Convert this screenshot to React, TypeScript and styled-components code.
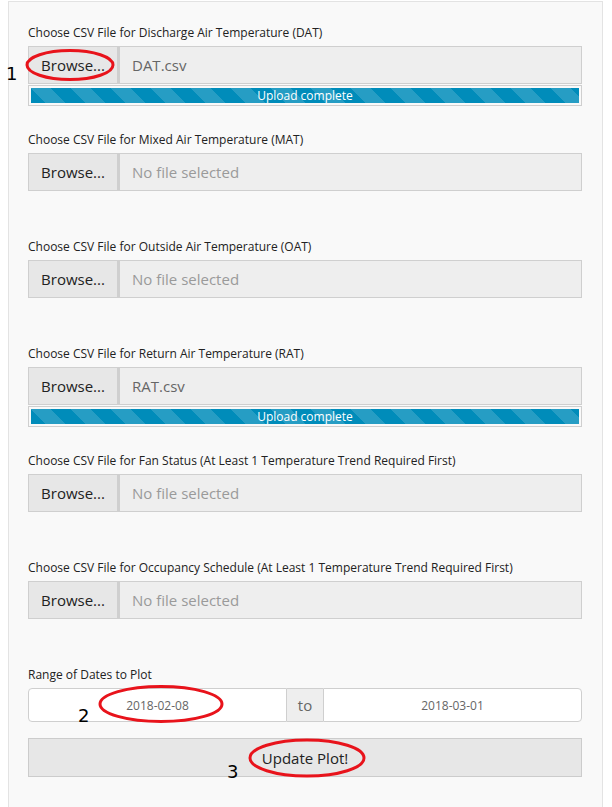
import React from 'react';
import styled, { createGlobalStyle } from 'styled-components';

const GlobalStyle = createGlobalStyle`
  html, body {
    margin: 0;
    padding: 0;
    background: #ffffff;
  }
  body {
    font-family: "Open Sans", "Liberation Sans", sans-serif;
    color: #222;
  }
  * {
    box-sizing: border-box;
  }
`;

const Page = styled.div`
  position: relative;
  width: 612px;
  height: 807px;
  overflow: hidden;
`;

const Well = styled.div`
  margin: 1px 0 0 8px;
  width: 595px;
  min-height: 830px;
  background: #f9f9f9;
  border: 1px solid #e3e3e3;
  padding: 22px 20px 40px 19px;
`;

const FieldGroup = styled.div`
  margin-bottom: 25px;
`;

const Label = styled.label`
  display: block;
  font-size: 12px;
  line-height: 17px;
  margin-bottom: 5px;
  color: #222;
`;

const InputGroup = styled.div`
  display: flex;
  height: 38px;
`;

const BrowseButton = styled.div`
  width: 90px;
  display: flex;
  align-items: center;
  justify-content: center;
  background: #e7e7e7;
  border: 1px solid #cfcfcf;
  font-size: 15px;
  color: #222;
`;

const FileName = styled.div<{ $empty: boolean }>`
  flex: 1;
  display: flex;
  align-items: center;
  padding-left: 12px;
  background: #eeeeee;
  border: 1px solid #cfcfcf;
  border-left-width: 2px;
  font-size: 15px;
  color: ${p => (p.$empty ? '#9a9a9a' : '#666')};
`;

const ProgressWrap = styled.div<{ $visible: boolean }>`
  margin-top: 1px;
  border: 1px solid #cfcfcf;
  padding: 2px;
  visibility: ${p => (p.$visible ? 'visible' : 'hidden')};
`;

const ProgressBar = styled.div`
  height: 15px;
  background-color: #008cba;
  background-image: linear-gradient(
    45deg,
    rgba(255, 255, 255, 0.15) 25%,
    transparent 25%,
    transparent 50%,
    rgba(255, 255, 255, 0.15) 50%,
    rgba(255, 255, 255, 0.15) 75%,
    transparent 75%,
    transparent
  );
  background-size: 40px 40px;
  color: #fff;
  font-size: 12px;
  line-height: 16px;
  text-align: center;
`;

const DateGroup = styled.div`
  display: flex;
  height: 34px;
`;

const DateInput = styled.div<{ $side: 'left' | 'right' }>`
  flex: 1;
  display: flex;
  align-items: center;
  justify-content: center;
  background: #fff;
  border: 1px solid #cfcfcf;
  border-radius: ${p => (p.$side === 'left' ? '4px 0 0 4px' : '0 4px 4px 0')};
  font-size: 12px;
  color: #666;
`;

const Addon = styled.div`
  width: 36px;
  display: flex;
  align-items: center;
  justify-content: center;
  background: #eeeeee;
  border-top: 1px solid #cfcfcf;
  border-bottom: 1px solid #cfcfcf;
  font-size: 15px;
  color: #666;
`;

const UpdateButton = styled.div`
  margin-top: 16px;
  height: 39px;
  display: flex;
  align-items: center;
  justify-content: center;
  background: #e7e7e7;
  border: 1px solid #cccccc;
  font-size: 15px;
  color: #222;
`;

const Overlay = styled.svg`
  position: absolute;
  left: 0;
  top: 0;
  pointer-events: none;
`;

const Marker = styled.span<{ $x: number; $y: number }>`
  position: absolute;
  left: ${p => p.$x}px;
  top: ${p => p.$y}px;
  font-family: "DejaVu Sans", sans-serif;
  font-size: 18px;
  line-height: 18px;
  color: #000;
`;

interface FileField {
  label: string;
  file?: string;
}

const fields: FileField[] = [
  { label: 'Choose CSV File for Discharge Air Temperature (DAT)', file: 'DAT.csv' },
  { label: 'Choose CSV File for Mixed Air Temperature (MAT)' },
  { label: 'Choose CSV File for Outside Air Temperature (OAT)' },
  { label: 'Choose CSV File for Return Air Temperature (RAT)', file: 'RAT.csv' },
  { label: 'Choose CSV File for Fan Status (At Least 1 Temperature Trend Required First)' },
  { label: 'Choose CSV File for Occupancy Schedule (At Least 1 Temperature Trend Required First)' },
];

const App: React.FC = () => {
  return (
    <Page>
      <GlobalStyle />
      <Well>
        {fields.map(f => (
          <FieldGroup key={f.label}>
            <Label>{f.label}</Label>
            <InputGroup>
              <BrowseButton>Browse...</BrowseButton>
              <FileName $empty={!f.file}>{f.file || 'No file selected'}</FileName>
            </InputGroup>
            <ProgressWrap $visible={!!f.file}>
              <ProgressBar>Upload complete</ProgressBar>
            </ProgressWrap>
          </FieldGroup>
        ))}

        <Label>Range of Dates to Plot</Label>
        <DateGroup>
          <DateInput $side="left">2018-02-08</DateInput>
          <Addon>to</Addon>
          <DateInput $side="right">2018-03-01</DateInput>
        </DateGroup>
        <UpdateButton>Update Plot!</UpdateButton>
      </Well>

      {/* red annotation marks drawn over the form */}
      <Overlay width="612" height="807" viewBox="0 0 612 807">
        <g fill="none" stroke="#e8131b" strokeWidth="3">
          <ellipse cx="70" cy="65" rx="43" ry="14.5" />
          <ellipse cx="161" cy="704" rx="61" ry="17.5" />
          <ellipse cx="307" cy="758" rx="57" ry="18" />
        </g>
      </Overlay>
      <Marker $x={6} $y={65}>1</Marker>
      <Marker $x={78} $y={707}>2</Marker>
      <Marker $x={227} $y={763}>3</Marker>
    </Page>
  );
};

export default App;
